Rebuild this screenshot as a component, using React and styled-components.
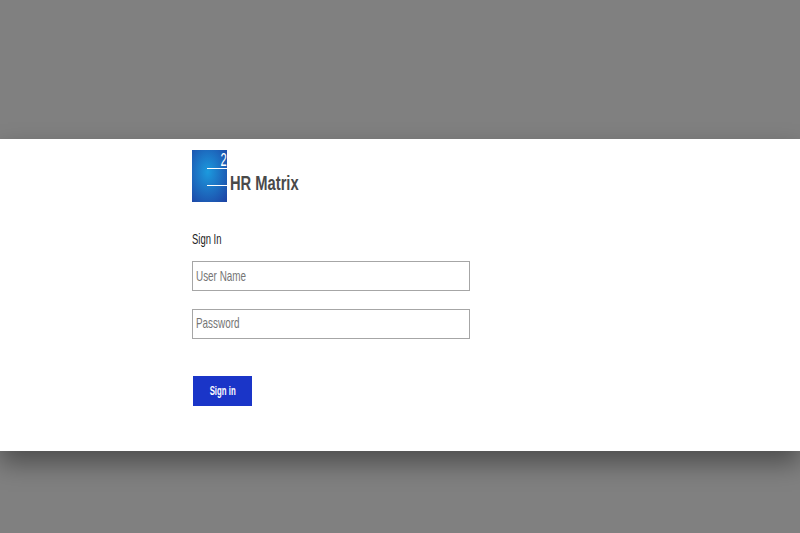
import styled, { createGlobalStyle } from 'styled-components';

const GlobalStyle = createGlobalStyle`
  html, body {
    margin: 0;
    height: 100%;
    overflow: hidden;
    background-color: #808080;
    font-family: 'Liberation Sans', Arial, sans-serif;
  }
`;

const Page = styled.div`
  height: 533px;
  padding-top: 139px;
  box-sizing: border-box;
`;

const Panel = styled.div`
  height: 312px;
  box-sizing: border-box;
  padding: 11px 0 0 192px;
  background-color: #fff;
  box-shadow: 0 12px 24px rgba(0, 0, 0, 0.4);
`;

const Brand = styled.div`
  display: flex;
  align-items: flex-end;
  gap: 3px;
  height: 52px;
`;

const BrandName = styled.h1`
  margin: 0 0 8px;
  font-size: 21px;
  line-height: 23px;
  font-weight: 700;
  color: #4a4a4a;
  transform: scaleX(0.7);
  transform-origin: left center;
`;

const Title = styled.div`
  margin-top: 29px;
  height: 16px;
  font-size: 15px;
  line-height: 16px;
  color: #222;
  transform: scaleX(0.63);
  transform-origin: left center;
`;

const Form = styled.form`
  display: flex;
  flex-direction: column;
  align-items: flex-start;
  margin-top: 14px;
`;

const Field = styled.div`
  width: 278px;
  height: 30px;
  box-sizing: border-box;
  margin-bottom: 18px;
  padding-left: 3px;
  border: 1px solid #a6a6a6;
  background-color: #fff;
  font-size: 15px;
  line-height: ${(props) => props.$lineHeight}px;
  color: #757575;
  span {
    display: inline-block;
    transform: scaleX(0.66);
    transform-origin: left center;
  }
`;

const SignInButton = styled.button`
  width: 59px;
  height: 30px;
  margin: 19px 0 0 1px;
  padding: 0 0 2px;
  border: 0;
  background-color: #1a35c8;
  color: #fff;
  font-family: inherit;
  font-size: 13px;
  font-weight: 700;
  span {
    display: inline-block;
    transform: scaleX(0.6);
  }
`;

const LogoDigit = styled.text`
  font-family: 'Liberation Sans', sans-serif;
  font-size: 18px;
  fill: #fff;
`;

const Logo = () => (
  <svg width="35" height="52" viewBox="0 0 35 52">
    <defs>
      <radialGradient id="logoFill" cx="0.45" cy="0.42" r="0.75">
        <stop offset="0" stopColor="#1c9ade" />
        <stop offset="1" stopColor="#1d46a6" />
      </radialGradient>
    </defs>
    <rect width="35" height="52" fill="url(#logoFill)" />
    <rect x="15" y="18" width="20" height="1" fill="#fff" />
    <rect x="15" y="35" width="20" height="1" fill="#fff" />
    <LogoDigit x="0" y="0" transform="translate(28.5 16) scale(0.62 1)">2</LogoDigit>
  </svg>
);

export default function App() {
  return (
    <Page>
      <GlobalStyle />
      <Panel>
        <Brand>
          <Logo />
          <BrandName>HR Matrix</BrandName>
        </Brand>
        <Title>Sign In</Title>
        <Form>
          <Field $lineHeight={27}><span>User Name</span></Field>
          <Field $lineHeight={26}><span>Password</span></Field>
          <SignInButton type="button"><span>Sign in</span></SignInButton>
        </Form>
      </Panel>
    </Page>
  );
}
